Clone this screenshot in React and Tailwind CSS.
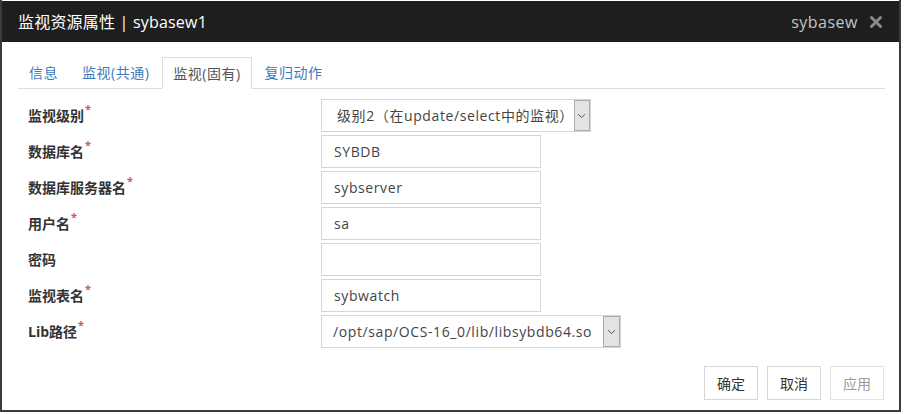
import { X } from "lucide-react";

const rows = [
  { label: "监视级别", required: true, type: "select", value: "级别2（在update/select中的监视）", width: "w-[270px]", pad: "pl-[15px]" },
  { label: "数据库名", required: true, value: "SYBDB" },
  { label: "数据库服务器名", required: true, value: "sybserver" },
  { label: "用户名", required: true, value: "sa" },
  { label: "密码", required: false, value: "" },
  { label: "监视表名", required: true, value: "sybwatch" },
  { label: "Lib路径", required: true, type: "select", value: "/opt/sap/OCS-16_0/lib/libsybdb64.so", width: "w-[300px]", pad: "pl-[11px]" },
];

const tabs = ["信息", "监视(共通)", "监视(固有)", "复归动作"];

const Chevron = () => (
  <svg width="9" height="6" viewBox="0 0 9 6" fill="none">
    <path d="M1 1.2 L4.5 4.6 L8 1.2" stroke="#555" strokeWidth="1" />
  </svg>
);

const App = () => {
  return (
    <div className="w-[904px] h-[414px] bg-white font-['Open_Sans','Noto_Sans_CJK_SC',sans-serif]">
      <div className="w-[901px] h-[412px] flex flex-col border-x-2 border-b-2 border-[#3b3b3b] bg-white">
        {/* header */}
        <div className="h-[41px] mt-[1px] bg-[#1e1e1e] flex items-center justify-between pl-[16px] pr-[14px]">
          <span className="text-white text-[16px] leading-none tracking-[0.2px]">监视资源属性 | sybasew1</span>
          <div className="flex items-center gap-[9px]">
            <span className="text-[#c4c4c4] text-[16px] leading-none tracking-[0.5px]">sybasew</span>
            <X size={18} strokeWidth={4} className="text-[#8a8a8a]" />
          </div>
        </div>

        {/* body */}
        <div className="flex-1 flex flex-col pl-[16px] pr-[14px]">
          {/* tabs */}
          <div className="mt-[15px] flex border-b border-[#dddddd] h-[32px]">
            {tabs.map((t, i) => (
              <div
                key={t}
                className={
                  i === 2
                    ? "mr-[2px] -mb-[1px] px-[10px] flex items-center border border-[#dddddd] border-b-white bg-white text-[#555555] text-[14px] tracking-[0.5px]"
                    : "mr-[2px] px-[10px] flex items-center border border-transparent text-[#3a7cbf] text-[14px] tracking-[0.5px]"
                }
              >
                {t}
              </div>
            ))}
          </div>

          {/* form */}
          <div className="mt-[10px] flex flex-col gap-[3px]">
            {rows.map((r) => (
              <div key={r.label} className="flex items-center h-[33px]">
                <div className="w-[303px] pl-[10px] text-[14px] font-bold text-[#333333] flex items-start">
                  <span>{r.label}</span>
                  {r.required && <span className="text-[#d9534f] text-[11px] leading-none -mt-[2px] ml-[1px]">*</span>}
                </div>
                {r.type === "select" ? (
                  <div className={`${r.width} h-[33px] flex border border-[#d6d6d6] text-[14px] text-[#444444] tracking-[0.6px]`}>
                    <div className={`flex-1 flex items-center ${r.pad} whitespace-nowrap`}>{r.value}</div>
                    <div className="w-[17px] bg-[#e3e3e3] border border-[#ababab] flex items-center justify-center">
                      <Chevron />
                    </div>
                  </div>
                ) : (
                  <div className="w-[220px] h-[33px] flex items-center pl-[12px] border border-[#d6d6d6] text-[14px] text-[#444444] tracking-[0.6px]">
                    {r.value}
                  </div>
                )}
              </div>
            ))}
          </div>

          {/* buttons */}
          <div className="mt-[18px] flex justify-end gap-[9px] pr-[1px]">
            <div className="w-[54px] h-[34px] flex items-center justify-center border border-[#d6d6d6] text-[14px] text-[#333333]">确定</div>
            <div className="w-[54px] h-[34px] flex items-center justify-center border border-[#d6d6d6] text-[14px] text-[#333333]">取消</div>
            <div className="w-[54px] h-[34px] flex items-center justify-center border border-[#e2e2e2] text-[14px] text-[#9a9a9a]">应用</div>
          </div>
        </div>
      </div>
    </div>
  );
};

export default App;
